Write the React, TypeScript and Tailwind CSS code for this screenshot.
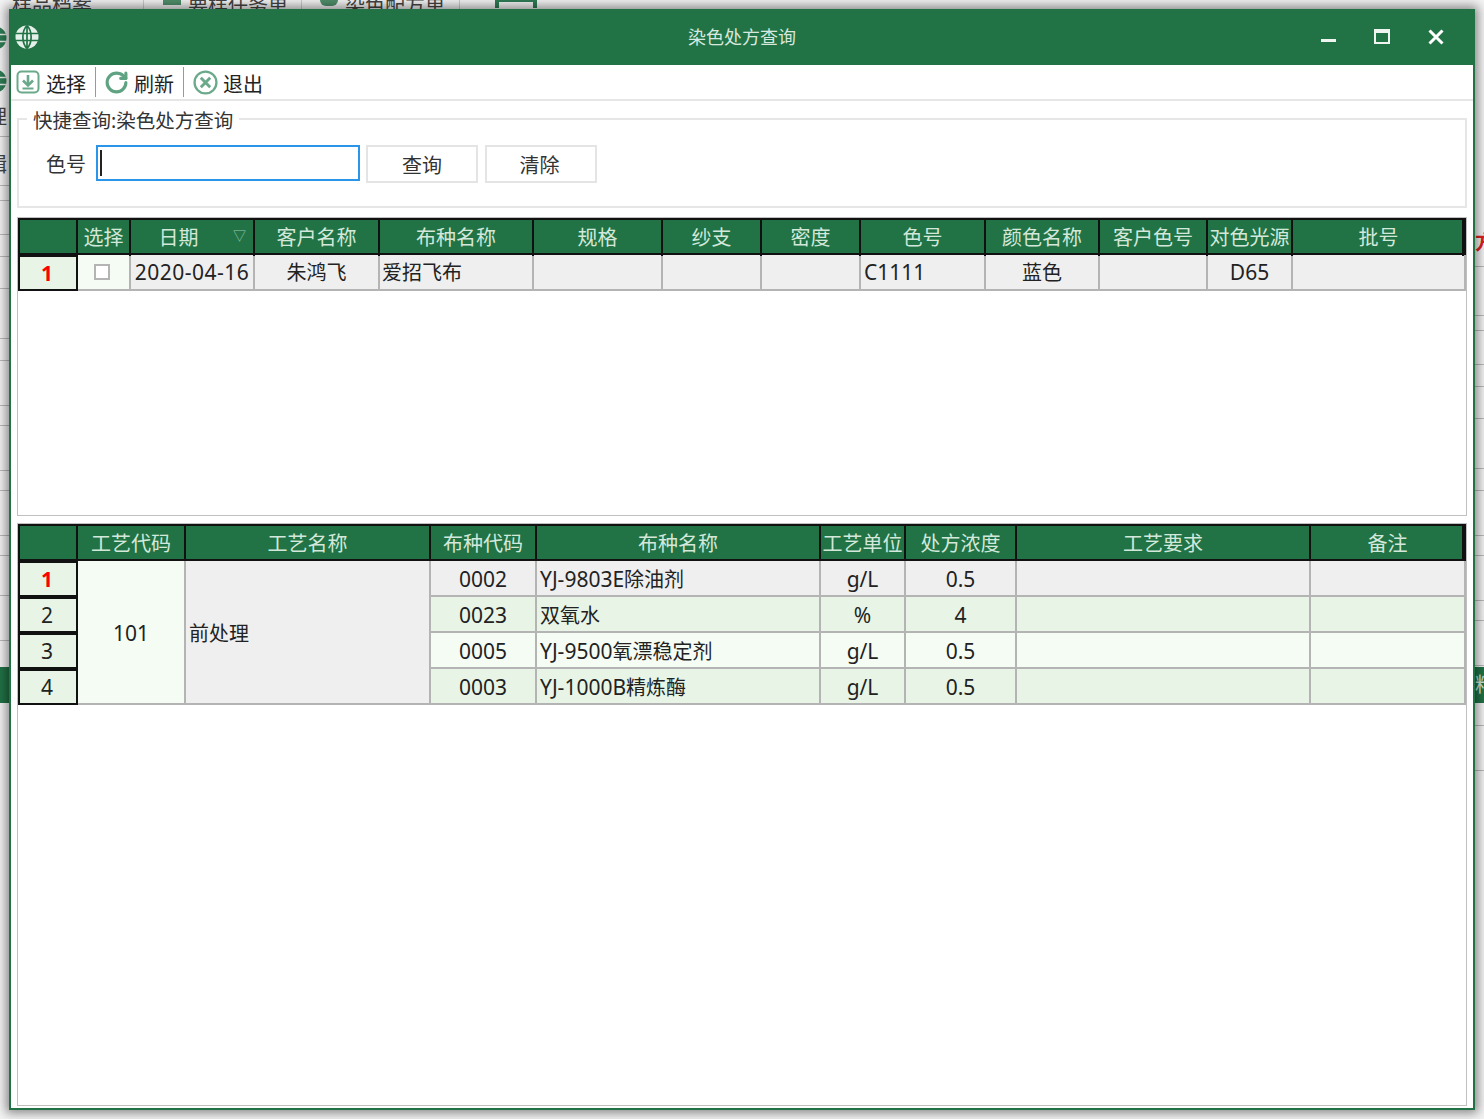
import { RotateCw } from "lucide-react";

const FONT = "font-['Noto_Sans','Noto_Sans_CJK_SC',sans-serif]";

const TOP_COLS = [
  { title: "选择", width: "w-[53px]" },
  { title: "日期", width: "w-[124px]" },
  { title: "客户名称", width: "w-[125px]" },
  { title: "布种名称", width: "w-[154px]" },
  { title: "规格", width: "w-[129px]" },
  { title: "纱支", width: "w-[99px]" },
  { title: "密度", width: "w-[99px]" },
  { title: "色号", width: "w-[125px]" },
  { title: "颜色名称", width: "w-[114px]" },
  { title: "客户色号", width: "w-[108px]" },
  { title: "对色光源", width: "w-[85px]" },
  { title: "批号", width: "flex-1" },
];

const BOTTOM_HEAD = [
  "工艺代码",
  "工艺名称",
  "布种代码",
  "布种名称",
  "工艺单位",
  "处方浓度",
  "工艺要求",
  "备注",
];

const BOTTOM_ROWS = [
  { code: "0002", latin: "YJ-9803E", name: "除油剂", unit: "g/L", conc: "0.5", bg: "bg-[#efefef]" },
  { code: "0023", latin: "", name: "双氧水", unit: "%", conc: "4", bg: "bg-[#e8f5e6]" },
  { code: "0005", latin: "YJ-9500", name: "氧漂稳定剂", unit: "g/L", conc: "0.5", bg: "bg-[#f5fcf4]" },
  { code: "0003", latin: "YJ-1000B", name: "精炼酶", unit: "g/L", conc: "0.5", bg: "bg-[#e8f5e6]" },
];

// left edge of the app behind the dialog: row rules
const BEHIND_RULES = [136, 185, 200, 234, 256, 288, 338, 360, 405, 425, 470, 490, 535, 555, 595, 640];

function HeadCell({ title, className = "" }: { title: string; className?: string }) {
  return (
    <div
      className={`flex h-[36px] items-center justify-center border-r-2 border-[#111] text-[20px] whitespace-nowrap text-[#d3e8da] ${className}`}
    >
      {title}
    </div>
  );
}

function Cell({ children, low, className = "" }: { children?: React.ReactNode; low?: boolean; className?: string }) {
  return (
    <div
      className={`flex items-center border-r-2 border-b-2 border-[#b4b4b4] text-[20px] whitespace-nowrap text-[#222] ${
        low ? "pt-[4px]" : "pt-[2px]"
      } ${className}`}
    >
      {children}
    </div>
  );
}

function RowHead({ n, active }: { n: number; active?: boolean }) {
  return (
    <div
      className={`flex h-[36px] items-center justify-center border-2 border-[#111] bg-[#e8f5e6] pt-[1px] pr-[2px] text-[21px] ${
        active ? "font-bold text-[#f00]" : "text-[#222]"
      }`}
    >
      {n}
    </div>
  );
}

function TopTable() {
  return (
    <div className="h-[299px] border border-[#c0c0c0] bg-white">
      <div className="flex h-[37px] border-2 border-[#111] bg-[#217346]">
        <HeadCell title="" className="w-[58px]" />
        {TOP_COLS.map((c, i) => (
          <div key={c.title} className={`relative ${c.width}`}>
            <HeadCell
              title={c.title}
              className={`${i === 11 ? "border-r-0 pl-[2px]" : ""} ${c.title === "日期" ? "pr-[27px]" : ""}`}
            />
            {c.title === "日期" && (
              <span className="absolute top-[7px] right-[9px] text-[13px] leading-[16px] text-[#9fc4ae]">▽</span>
            )}
          </div>
        ))}
      </div>
      <div className="flex h-[36px]">
        <div className="w-[60px]">
          <RowHead n={1} active />
        </div>
        <Cell className="w-[53px] justify-center bg-[#f5fcf4] pr-[3px]">
          <span className="mb-[2px] h-[16px] w-[16px] border-2 border-[#b4b4b4] bg-white" />
        </Cell>
        <Cell className="w-[124px] justify-center bg-[#efefef] text-[21px] tracking-[0.5px]">2020-04-16</Cell>
        <Cell className="w-[125px] justify-center bg-[#efefef]">朱鸿飞</Cell>
        <Cell className="w-[154px] bg-[#efefef] pl-[2px]">爱招飞布</Cell>
        <Cell className="w-[129px] bg-[#efefef]" />
        <Cell className="w-[99px] bg-[#efefef]" />
        <Cell className="w-[99px] bg-[#efefef]" />
        <Cell className="w-[125px] bg-[#efefef] pl-[3px] text-[21px]">C1111</Cell>
        <Cell className="w-[114px] justify-center bg-[#efefef]">蓝色</Cell>
        <Cell className="w-[108px] bg-[#efefef]" />
        <Cell className="w-[85px] justify-center bg-[#efefef] text-[21px]">D65</Cell>
        <Cell className="flex-1 bg-[#efefef]" />
      </div>
    </div>
  );
}

function RowCells({ row }: { row: (typeof BOTTOM_ROWS)[number] }) {
  return (
    <>
      <Cell low className={`justify-center text-[21px] ${row.bg}`}>{row.code}</Cell>
      <Cell low className={`pl-[3px] ${row.bg}`}>
        <span className="text-[21px]">{row.latin}</span>
        {row.name}
      </Cell>
      <Cell low className={`justify-center text-[21px] ${row.bg}`}>{row.unit}</Cell>
      <Cell low className={`justify-center text-[21px] ${row.bg}`}>{row.conc}</Cell>
      <Cell className={row.bg} />
      <Cell className={row.bg} />
    </>
  );
}

function BottomTable() {
  return (
    <div className="mt-[7px] h-[583px] border border-[#c0c0c0] bg-white">
      <div className="grid grid-cols-[60px_108px_245px_106px_284px_85px_111px_294px_1fr] grid-rows-[37px_36px_36px_36px_36px]">
        <div className="col-span-9 grid grid-cols-[58px_108px_245px_106px_284px_85px_111px_294px_1fr] border-2 border-[#111] bg-[#217346]">
          <HeadCell title="" className="h-[33px]" />
          {BOTTOM_HEAD.map((t, i) => (
            <HeadCell key={t} title={t} className={`h-[33px] ${i === 7 ? "border-r-0 pl-[2px]" : ""}`} />
          ))}
        </div>
        <RowHead n={1} active />
        <Cell low className="row-span-4 justify-center bg-[#f5fcf4] text-[21px]">101</Cell>
        <Cell low className="row-span-4 bg-[#efefef] pl-[3px]">前处理</Cell>
        <RowCells row={BOTTOM_ROWS[0]} />
        <RowHead n={2} />
        <RowCells row={BOTTOM_ROWS[1]} />
        <RowHead n={3} />
        <RowCells row={BOTTOM_ROWS[2]} />
        <RowHead n={4} />
        <RowCells row={BOTTOM_ROWS[3]} />
      </div>
    </div>
  );
}

function ToolButton({ icon, label }: { icon: React.ReactNode; label: string }) {
  return (
    <div className="flex h-[30px] items-center gap-[5px] text-[20px] text-[#222]">
      {icon}
      <span className="pt-[5px]">{label}</span>
    </div>
  );
}

function GlobeIcon({ size, bg, line }: { size: number; bg: string; line: string }) {
  return (
    <svg viewBox="0 0 24 24" width={size} height={size} fill="none">
      <circle cx="12" cy="12" r="11.5" fill={bg} />
      <path
        d="M1 8.5h22M1 15.5h22M12 .5v23M12 .5C6.5 6 6.5 18 12 23.5M12 .5c5.5 5.500 5.500 17.500 0 23"
        stroke={line}
        strokeWidth="1.7"
      />
    </svg>
  );
}

function Desktop() {
  return (
    <>
      <div className="absolute top-[-9px] left-[12px] text-[20px] whitespace-nowrap text-[#444]">样品档案</div>
      <div className="absolute top-[-9px] left-[188px] text-[20px] whitespace-nowrap text-[#444]">要样任务单</div>
      <div className="absolute top-[-9px] left-[345px] text-[20px] whitespace-nowrap text-[#444]">染色配方单</div>
      <div className="absolute top-0 left-[143px] h-[9px] w-px bg-[#ccc]" />
      <div className="absolute top-0 left-[301px] h-[9px] w-px bg-[#ccc]" />
      <div className="absolute top-0 left-[459px] h-[9px] w-px bg-[#ccc]" />
      <div className="absolute top-0 left-[163px] h-[5px] w-[18px] bg-[#4f8f6b]" />
      <div className="absolute top-0 left-[320px] h-[6px] w-[18px] rounded-b-full bg-[#4f8f6b]" />
      <div className="absolute top-0 left-[495px] h-[8px] w-[42px] border-x-4 border-t-2 border-[#2f7d55]" />
      {BEHIND_RULES.map((y) => (
        <div key={y} className="absolute left-0 h-px w-[9px] bg-[#bbb]" style={{ top: y }} />
      ))}
      {BEHIND_RULES.map((y) => (
        <div key={y} className="absolute right-0 h-px w-[9px] bg-[#bbb]" style={{ top: y + 130 }} />
      ))}
      <div className="absolute top-[26px] left-[-17px]">
        <GlobeIcon size={24} bg="#2f7d55" line="#e6f0ea" />
      </div>
      <div className="absolute top-[69px] left-[-17px]">
        <GlobeIcon size={24} bg="#2f7d55" line="#e6f0ea" />
      </div>
      <div className="absolute top-[102px] left-[-13px] text-[20px] text-[#444]">理</div>
      <div className="absolute top-[150px] left-[-13px] text-[20px] text-[#444]">辑</div>
      <div className="absolute top-[667px] left-0 h-[36px] w-[9px] bg-[#217346]" />
      <div className="absolute top-[667px] right-0 flex h-[36px] w-[9px] items-center overflow-hidden bg-[#217346] text-[20px] text-[#d3e8da]">
        料
      </div>
      <div className="absolute top-[228px] left-[1475px] text-[20px] font-bold text-[#e02020]">方</div>
    </>
  );
}

export default function App() {
  return (
    <div className={`relative h-[1119px] w-[1484px] overflow-hidden bg-[#f4f4f4] ${FONT}`}>
      <Desktop />
      <div className="absolute top-[9px] left-[9px] flex h-[1101px] w-[1466px] flex-col border-x-2 border-b-2 border-[#217346] bg-white shadow-[0_0_10px_3px_rgba(0,0,0,0.45)]">
        <div className="relative -mx-[2px] flex h-[56px] items-center justify-between bg-[#217346] pr-[31px] pl-[6px]">
          <GlobeIcon size={24} bg="#e6f0ea" line="#217346" />
          <span className="absolute left-[679px] text-[18px] text-[#d8e8de]">染色处方查询</span>
          <div className="flex items-center gap-[38px]">
            <span className="mt-[7px] h-[3px] w-[15px] bg-[#eef5f1]" />
            <span className="mb-[1px] h-[15px] w-[16px] border-2 border-t-4 border-[#eef5f1]" />
            <svg viewBox="0 0 16 16" className="mb-[1px] h-[16px] w-[16px]" stroke="#fff" strokeWidth="3" fill="none">
              <path d="M1.500 1.500l13 13M14.500 1.500l-13 13" />
            </svg>
          </div>
        </div>

        <div className="flex h-[36px] items-center border-b-2 border-[#e6e6e6] pl-[5px]">
          <ToolButton
            label="选择"
            icon={
              <svg viewBox="0 0 24 24" className="mr-px h-[24px] w-[24px]" fill="none" stroke="#6aa98a" strokeWidth="2">
                <rect x="1.500" y="1.500" width="21" height="21" rx="4" />
                <path d="M12 5v10" strokeWidth="2.600" />
                <path d="M7 10.500l5 5 5-5" strokeWidth="2.600" />
                <path d="M6.500 18.500h11" />
              </svg>
            }
          />
          <div className="mr-[8px] ml-[9px] h-[30px] w-px bg-[#999]" />
          <ToolButton label="刷新" icon={<RotateCw className="h-[25px] w-[25px] text-[#5fa383]" strokeWidth={3} />} />
          <div className="mx-[9px] h-[30px] w-px bg-[#999]" />
          <ToolButton
            label="退出"
            icon={
              <svg viewBox="0 0 24 24" className="h-[25px] w-[25px]" fill="none" stroke="#6aa98a">
                <circle cx="12" cy="12" r="10.500" strokeWidth="2.200" />
                <path d="M7.500 7.500l9 9M16.500 7.500l-9 9" strokeWidth="2.800" />
              </svg>
            }
          />
        </div>

        <div className="flex flex-1 flex-col px-[6px] pt-[17px]">
          <div className="relative flex h-[90px] gap-[6px] border-2 border-[#e6e6e6] pt-[25px] pl-[27px]">
            <span className="absolute top-[-12px] left-[8px] bg-white px-[6px] text-[19.5px] leading-[26px] whitespace-nowrap text-[#333]">
              快捷查询:染色处方查询
            </span>
            <span className="mr-[4px] pt-[2px] text-[20px] leading-[36px] text-[#333]">色号</span>
            <div className="flex h-[36px] w-[264px] items-center border-2 border-[#2b95e9] pl-[2px]">
              <span className="h-[26px] w-[2px] bg-[#222]" />
            </div>
            <button className="h-[38px] w-[112px] border-2 border-[#e4e4e4] bg-white pt-[3px] text-[20px] text-[#333]">查询</button>
            <button className="ml-px h-[38px] w-[112px] border-2 border-[#e4e4e4] bg-white pt-[3px] pr-[3px] text-[20px] text-[#333]">清除</button>
          </div>
          <div className="mt-[9px]">
            <TopTable />
          </div>
          <BottomTable />
        </div>
      </div>
    </div>
  );
}
